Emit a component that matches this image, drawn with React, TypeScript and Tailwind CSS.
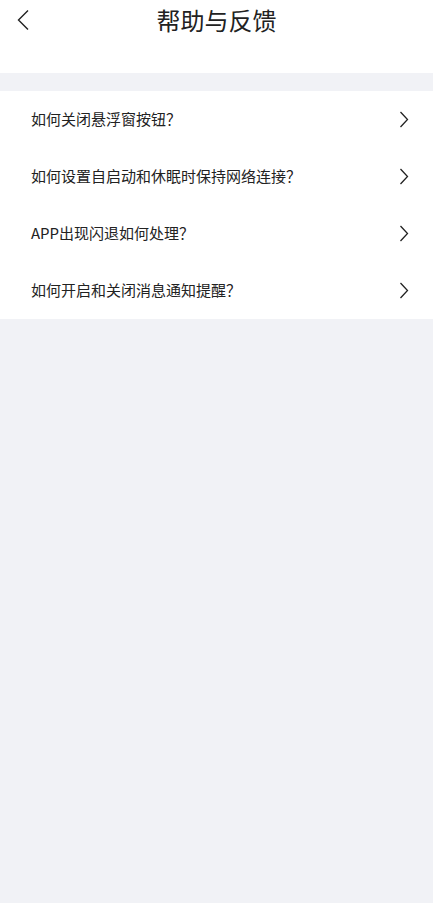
import React from "react";

const items = [
  "如何关闭悬浮窗按钮？",
  "如何设置自启动和休眠时保持网络连接？",
  "APP出现闪退如何处理？",
  "如何开启和关闭消息通知提醒？",
];

function Chevron({ dir }: { dir: "left" | "right" }) {
  if (dir === "left") {
    return (
      <svg width="14" height="22" viewBox="0 0 14 22" fill="none">
        <path d="M12 1.5L2.5 11L12 20.5" stroke="#222" strokeWidth="1.4" />
      </svg>
    );
  }
  return (
    <svg width="10" height="17" viewBox="0 0 10 17" fill="none">
      <path d="M1.5 1L8.5 8.5L1.5 16" stroke="#222" strokeWidth="1.3" />
    </svg>
  );
}

export default function App() {
  return (
    <div
      className="w-[433px] h-[903px] bg-[#f1f2f6] flex flex-col text-[#222]"
      style={{ fontFamily: '"Noto Sans CJK SC", "Noto Sans", sans-serif' }}
    >
      <div className="h-[73px] bg-white relative flex justify-center">
        <div className="absolute left-[16px] top-[9px]">
          <Chevron dir="left" />
        </div>
        <h1 className="text-[24px] leading-none mt-[8px] font-normal">帮助与反馈</h1>
      </div>
      <div className="h-[18px]" />
      <div className="bg-white">
        {items.map((t) => (
          <div key={t} className="h-[57px] flex items-center justify-between pl-[31px] pr-[24px]">
            <span className="text-[15px]">{t}</span>
            <Chevron dir="right" />
          </div>
        ))}
      </div>
    </div>
  );
}
